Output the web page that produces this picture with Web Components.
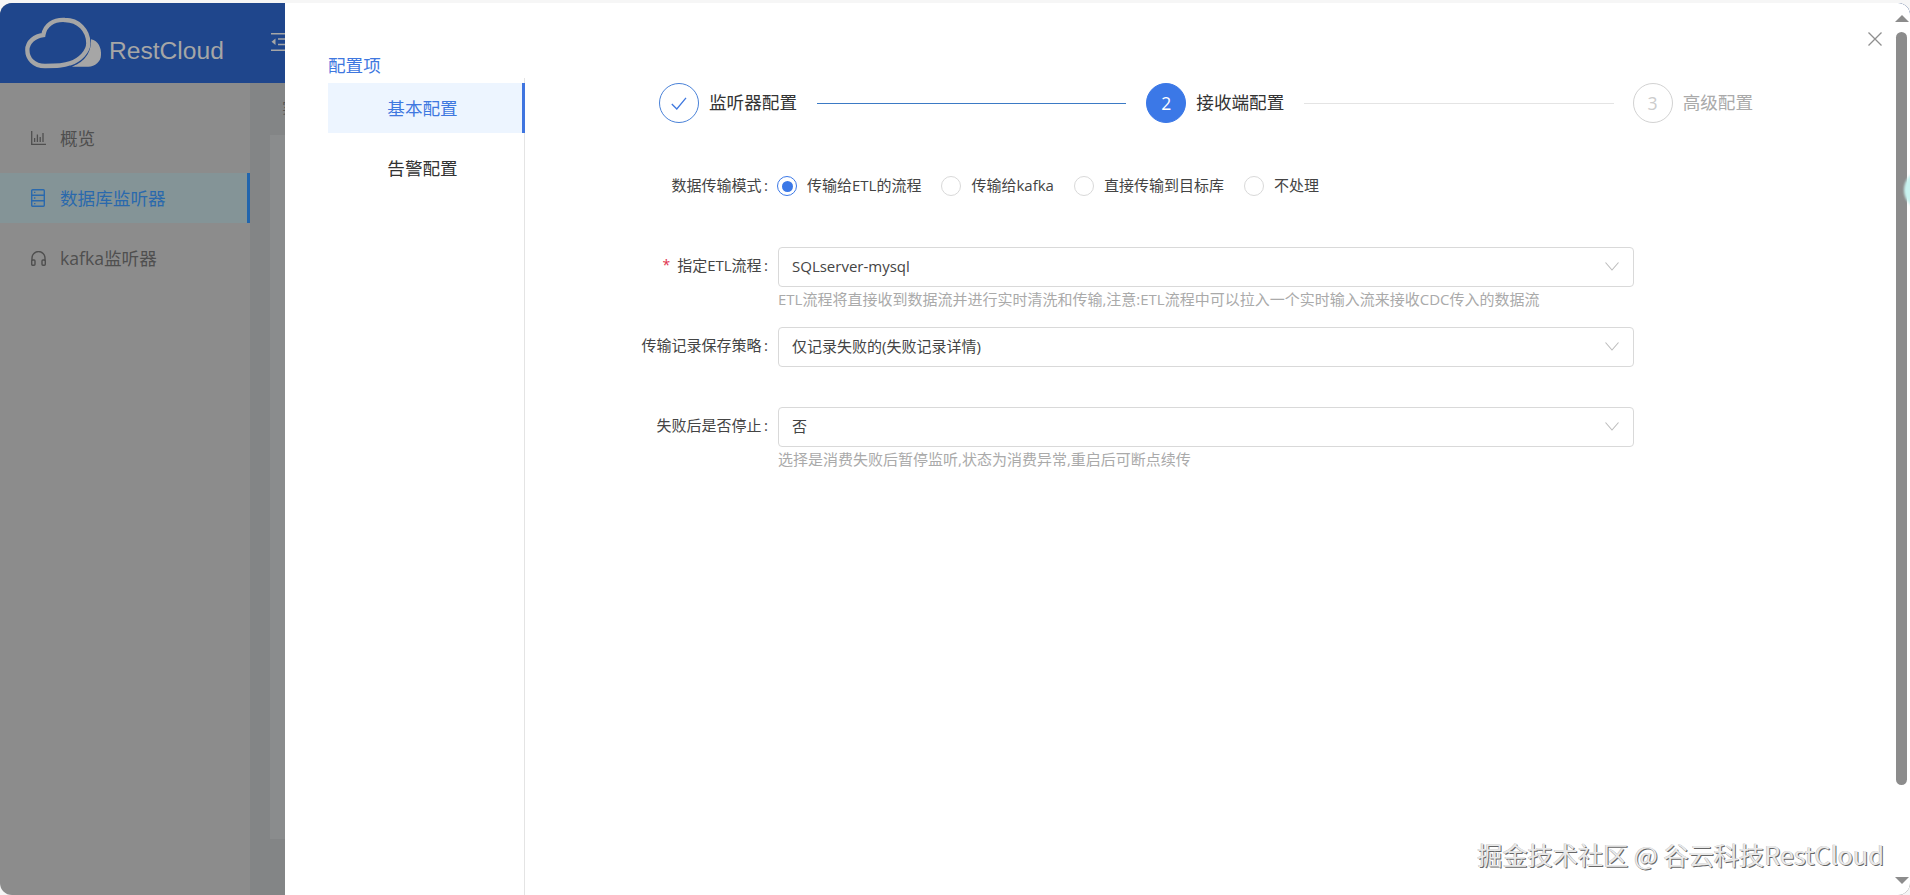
<!DOCTYPE html>
<html lang="zh-CN">
<head>
<meta charset="utf-8">
<title>RestCloud</title>
<style>
  html, body { margin: 0; height: 100%; overflow: hidden; background: #f6f6f6; }
  body { font-family: "Open Sans", "Noto Sans CJK SC", sans-serif; font-size: 15px; }
</style>
</head>
<body>
<rc-app>
  <rc-side-item slot="side" icon="chart">概览</rc-side-item>
  <rc-side-item slot="side" icon="server" active>数据库监听器</rc-side-item>
  <rc-side-item slot="side" icon="headset">kafka监听器</rc-side-item>

  <rc-drawer slot="drawer">
    <span slot="nav-title">配置项</span>
    <rc-nav-item slot="nav" active>基本配置</rc-nav-item>
    <rc-nav-item slot="nav">告警配置</rc-nav-item>

    <rc-steps slot="steps">
      <rc-step state="done">监听器配置</rc-step>
      <rc-step state="current" num="2">接收端配置</rc-step>
      <rc-step state="wait" num="3">高级配置</rc-step>
    </rc-steps>

    <rc-form-row label="数据传输模式">
      <rc-radio checked>传输给ETL的流程</rc-radio>
      <rc-radio>传输给kafka</rc-radio>
      <rc-radio>直接传输到目标库</rc-radio>
      <rc-radio>不处理</rc-radio>
    </rc-form-row>
    <rc-form-row label="指定ETL流程" required hint="ETL流程将直接收到数据流并进行实时清洗和传输,注意:ETL流程中可以拉入一个实时输入流来接收CDC传入的数据流">
      <rc-select>SQLserver-mysql</rc-select>
    </rc-form-row>
    <rc-form-row label="传输记录保存策略">
      <rc-select>仅记录失败的(失败记录详情)</rc-select>
    </rc-form-row>
    <rc-form-row label="失败后是否停止" hint="选择是消费失败后暂停监听,状态为消费异常,重启后可断点续传">
      <rc-select>否</rc-select>
    </rc-form-row>
  </rc-drawer>
</rc-app>

<script>
const ICONS = {
  chart: `<svg width="15" height="14" viewBox="0 0 15 14" fill="none" stroke="currentColor" stroke-width="1.3">
      <path d="M.7 0v13.3H15"/><path d="M3.6 11V7M6.4 11V3.5M9.2 11V6M12 11V2"/></svg>`,
  server: `<svg width="14" height="18" viewBox="0 0 14 18" fill="none" stroke="currentColor" stroke-width="1.4">
      <rect x=".7" y=".7" width="12.6" height="16.6" rx="1"/><path d="M.7 6.2h12.6M.7 11.8h12.6"/>
      <path d="M3 3.4h1.4M3 9h1.4M3 14.6h1.4"/></svg>`,
  headset: `<svg width="15" height="15" viewBox="0 0 15 15" fill="none" stroke="currentColor" stroke-width="1.4">
      <path d="M1 10V7a6.500 6.500 0 0 1 13 0v3"/><rect x=".7" y="9" width="3.300" height="5.300" rx="1"/><rect x="11" y="9" width="3.300" height="5.300" rx="1"/></svg>`,
};

class RcApp extends HTMLElement {
  constructor() {
    super();
    this.attachShadow({ mode: "open" });
  }

  connectedCallback() {
    this.shadowRoot.innerHTML = `
      <style>
        :host { display: block; height: 100vh; padding-top: 3px; box-sizing: border-box; position: relative; }
        .frame { height: 100%; display: flex; flex-direction: column; border-radius: 12px; overflow: hidden; background: #8c8c8c; }
        header { flex: none; height: 80px; background: #1f468c; display: flex; align-items: center; padding-left: 20px; color: #a6a6a6; }
        header svg.logo { margin-top: 4px; }
        .brand { margin-left: 1px; font: 24.600px/1 "Liberation Sans", sans-serif; margin-top: 16px; }
        .fold { margin-left: 47px; margin-top: -2px; }
        .body { flex: 1; display: flex; min-height: 0; }
        aside { flex: none; width: 250px; padding-top: 30px; display: flex; flex-direction: column; gap: 10px; box-sizing: border-box; }
        main { flex: 1; background: #838586; padding: 0 0 56px 20px; display: flex; flex-direction: column; color: #555; min-width: 0; }
        .crumb { height: 52px; line-height: 48px; padding-left: 12px; }
        .panel { flex: 1; background: #8a8c8d; }
      </style>
      <div class="frame">
        <header>
          <svg class="logo" width="88" height="70" viewBox="0 0 264 210">
            <path d="M70 75C75 45 100 28 135 30 175 30 205 60 205 100 205 125 180 150 150 160 130 168 110 168 75 168 40 168 22 145 22 120 22 95 45 78 70 75Z" fill="none" stroke="#a6a6a6" stroke-width="13"/>
            <path d="M213 88C235 92 245 115 243 135 243 155 225 170 205 170L155 170C185 160 215 135 213 88Z" fill="#a6a6a6"/>
          </svg>
          <span class="brand">RestCloud</span>
          <svg class="fold" width="20" height="18" viewBox="0 0 20 18" fill="none" stroke="#a6a6a6" stroke-width="1.6">
            <path d="M0 .8h20M7 6h13M7 11.500h13M0 17.200h20"/><path d="M4.500 5.500 .5 8.800l4 3.200Z" fill="#a6a6a6" stroke="none"/>
          </svg>
        </header>
        <div class="body">
          <aside><slot name="side"></slot></aside>
          <main><div class="crumb">实时</div><div class="panel"></div></main>
        </div>
      </div>
      <slot name="drawer"></slot>
    `;
  }
}

class RcSideItem extends HTMLElement {
  constructor() {
    super();
    this.attachShadow({ mode: "open" });
  }

  connectedCallback() {
    this.shadowRoot.innerHTML = `
      <style>
        :host { display: flex; align-items: center; height: 50px; padding-left: 31px; color: #4f4f4f; font-size: 17.6px; box-sizing: border-box; }
        :host([active]) { background: #849497; color: #2a69ad; border-right: 3px solid #2165ad; }
        .icon { width: 29px; display: flex; }
        .text { padding-bottom: 1px; }
      </style>
      <span class="icon">${ICONS[this.getAttribute("icon")]}</span><span class="text"><slot></slot></span>
    `;
  }
}

class RcDrawer extends HTMLElement {
  constructor() {
    super();
    this.attachShadow({ mode: "open" });
  }

  connectedCallback() {
    this.shadowRoot.innerHTML = `
      <style>
        /* the drawer lies over the page */
        :host { display: flex; position: absolute; left: 285px; top: 3px; right: 0; bottom: 0; background: #fff; border-radius: 0 12px 12px 0; }
        .left { flex: none; width: 197px; margin-left: 43px; padding-top: 49px; display: flex; flex-direction: column; }
        .title { height: 26px; line-height: 26px; font-size: 17.6px; color: #3f78df; }
        nav { flex: 1; border-right: 1px solid #e4e4e4; padding-top: 5px; display: flex; flex-direction: column; gap: 10px; }
        .right { flex: 1; min-width: 0; padding: 80px 0 0 134px; position: relative; }
        .close { position: absolute; right: 11px; top: 29px; display: flex; }
        .bar { flex: none; width: 17px; position: relative; display: flex; flex-direction: column; align-items: center; overflow: hidden; }
        .arrow { width: 0; height: 0; border-left: 7px solid transparent; border-right: 7px solid transparent; }
        .up { border-bottom: 7px solid #8c8c8c; margin-top: 12px; }
        .down { border-top: 7px solid #8c8c8c; margin-bottom: 11px; }
        .thumb { width: 11px; flex: 1; margin: 10px 0 92px; border-radius: 6px; background: #8c8c8c; }
        .glow { position: absolute; left: 11px; top: 167px; width: 40px; height: 40px; border-radius: 50%; background: #c9f4f1; filter: blur(1px); }
        .mark { position: absolute; right: 26px; bottom: 26px; font: 25.200px/1.2 "Noto Sans CJK SC", sans-serif; color: #e9e9e9; text-shadow: 1px 1px 0 #666, -0.5px -0.5px 0 #bbb; white-space: nowrap; }
      </style>
      <div class="left">
        <div class="title"><slot name="nav-title"></slot></div>
        <nav><slot name="nav"></slot></nav>
      </div>
      <div class="right">
        <slot name="steps"></slot>
        <slot></slot>
        <div class="close">
          <svg width="14" height="14" viewBox="0 0 14 14" stroke="#8f8f8f" stroke-width="1.3"><path d="M.5.500l13 13M13.500.500l-13 13"/></svg>
        </div>
      </div>
      <div class="bar">
        <div class="arrow up"></div>
        <div class="thumb"></div>
        <div class="arrow down"></div>
        <div class="glow"></div>
      </div>
      <div class="mark">掘金技术社区 @ 谷云科技RestCloud</div>
    `;
  }
}

class RcNavItem extends HTMLElement {
  constructor() {
    super();
    this.attachShadow({ mode: "open" });
  }

  connectedCallback() {
    this.shadowRoot.innerHTML = `
      <style>
        :host { display: flex; align-items: center; justify-content: center; height: 50px; margin-right: -1px; padding: 0 8px 1px 0; font-size: 17.6px; color: #333; box-sizing: border-box; }
        :host([active]) { background: #edf5ff; color: #3f78df; border-right: 3px solid #3f75e0; padding-right: 5px; }
      </style>
      <slot></slot>
    `;
  }
}

class RcSteps extends HTMLElement {
  constructor() {
    super();
    this.attachShadow({ mode: "open" });
  }

  connectedCallback() {
    this.shadowRoot.innerHTML = `
      <style>
        :host { display: flex; width: 1094px; margin-bottom: 44px; }
      </style>
      <slot></slot>
    `;
  }
}

class RcStep extends HTMLElement {
  constructor() {
    super();
    this.attachShadow({ mode: "open" });
  }

  connectedCallback() {
    const state = this.getAttribute("state");
    const inner = state === "done"
      ? `<svg width="16" height="13" viewBox="0 0 16 13" fill="none" stroke="#3f78df" stroke-width="1.3"><path d="M.8 7l5 5L15 .8"/></svg>`
      : this.getAttribute("num");
    this.shadowRoot.innerHTML = `
      <style>
        :host { display: flex; align-items: center; flex: 1; height: 40px; font-size: 17.6px; color: #333; }
        :host([state="current"]) { margin-right: -1px; }
        :host([state="wait"]) { flex: none; color: #aaa; }
        .dot { flex: none; width: 40px; height: 40px; margin-right: 10px; box-sizing: border-box; border-radius: 50%; border: 1px solid #4a82d8; display: flex; align-items: center; justify-content: center; font-size: 17.6px; }
        :host([state="current"]) .dot { background: #3b78e7; border-color: #3b78e7; color: #fff; }
        :host([state="wait"]) .dot { border-color: #d2d2d2; color: #ccc; }
        .text { padding-bottom: 3px; }
        .line { flex: 1; height: 1px; margin: 0 20px; background: #3b7ac5; }
        :host([state="current"]) .line { background: #e4e4e4; }
        :host([state="wait"]) .line { display: none; }
      </style>
      <span class="dot">${inner}</span><span class="text"><slot></slot></span><span class="line"></span>
    `;
  }
}

class RcFormRow extends HTMLElement {
  constructor() {
    super();
    this.attachShadow({ mode: "open" });
  }

  connectedCallback() {
    const hint = this.getAttribute("hint");
    this.shadowRoot.innerHTML = `
      <style>
        :host { display: grid; grid-template-columns: 109px 856px; column-gap: 10px; height: 80px; color: #444; }
        .label { height: 40px; box-sizing: border-box; padding-bottom: 6px; display: flex; align-items: center; justify-content: flex-end; white-space: nowrap; }
        .star { color: #e0314b; margin-right: 7px; font-size: 14px; }
        .controls { height: 40px; display: flex; align-items: center; }
        .hint { margin-top: 2px; line-height: 20px; color: #aaa; white-space: nowrap; }
      </style>
      <div class="label">${this.hasAttribute("required") ? '<span class="star">*</span>' : ""}${this.getAttribute("label")}&thinsp;:</div>
      <div>
        <div class="controls"><slot></slot></div>
        ${hint ? `<div class="hint">${hint}</div>` : ""}
      </div>
    `;
  }
}

class RcRadio extends HTMLElement {
  constructor() {
    super();
    this.attachShadow({ mode: "open" });
  }

  connectedCallback() {
    this.shadowRoot.innerHTML = `
      <style>
        :host { display: inline-flex; align-items: center; margin-right: 20px; padding-bottom: 2px; color: #444; white-space: nowrap; }
        :host(:first-child) { margin-left: -1px; }
        .ring { width: 20px; height: 20px; box-sizing: border-box; border-radius: 50%; border: 1px solid #d9d9d9; margin-right: 10px; display: flex; align-items: center; justify-content: center; }
        :host([checked]) .ring { border-color: #3b78e7; }
        :host([checked]) .ring::after { content: ""; width: 11px; height: 11px; border-radius: 50%; background: #3b78e7; }
        .text { padding-bottom: 3px; }
      </style>
      <span class="ring"></span><span class="text"><slot></slot></span>
    `;
  }
}

class RcSelect extends HTMLElement {
  constructor() {
    super();
    this.attachShadow({ mode: "open" });
  }

  connectedCallback() {
    this.shadowRoot.innerHTML = `
      <style>
        :host { display: flex; align-items: center; justify-content: space-between; width: 100%; height: 40px; box-sizing: border-box; border: 1px solid #d9d9d9; border-radius: 4px; padding: 0 14px 0 13px; color: #444; }
        .value { padding-bottom: 3px; }
        svg { margin-bottom: 1px; }
      </style>
      <span class="value"><slot></slot></span>
      <svg width="14" height="9" viewBox="0 0 14 9" fill="none" stroke="#bdbdbd" stroke-width="1.1"><path d="M.5.500 7 8 13.500.500"/></svg>
    `;
  }
}

customElements.define("rc-app", RcApp);
customElements.define("rc-side-item", RcSideItem);
customElements.define("rc-drawer", RcDrawer);
customElements.define("rc-nav-item", RcNavItem);
customElements.define("rc-steps", RcSteps);
customElements.define("rc-step", RcStep);
customElements.define("rc-form-row", RcFormRow);
customElements.define("rc-radio", RcRadio);
customElements.define("rc-select", RcSelect);
</script>
</body>
</html>
